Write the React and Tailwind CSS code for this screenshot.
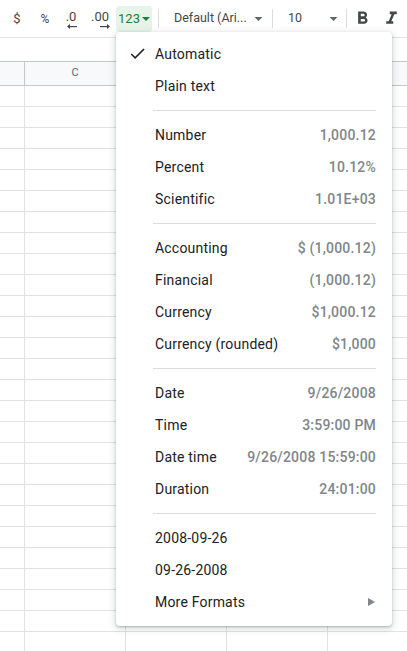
import React from "react";

const Tri = ({ color = "#5f6368", className = "" }) => (
  <svg width="10" height="5" viewBox="0 0 10 5" className={className}>
    <polygon points="0,0 10,0 5,5" fill={color} />
  </svg>
);

const Divider = () => <div className="w-px h-[19px] bg-[#dadce0] shrink-0" />;

const groups = [
  [
    { label: "Automatic", check: true },
    { label: "Plain text" },
  ],
  [
    { label: "Number", value: "1,000.12" },
    { label: "Percent", value: "10.12%" },
    { label: "Scientific", value: "1.01E+03" },
  ],
  [
    { label: "Accounting", value: "$ (1,000.12)" },
    { label: "Financial", value: "(1,000.12)" },
    { label: "Currency", value: "$1,000.12" },
    { label: "Currency (rounded)", value: "$1,000" },
  ],
  [
    { label: "Date", value: "9/26/2008" },
    { label: "Time", value: "3:59:00 PM" },
    { label: "Date time", value: "9/26/2008 15:59:00" },
    { label: "Duration", value: "24:01:00" },
  ],
  [
    { label: "2008-09-26" },
    { label: "09-26-2008" },
    { label: "More Formats", arrow: true },
  ],
];

function MenuItem({ item }) {
  return (
    <div className="relative flex items-center h-[32px] pl-[39px] pr-[16px]">
      {item.check && (
        <svg
          width="19"
          height="19"
          viewBox="0 0 24 24"
          className="absolute left-[12px] top-[6px]"
        >
          <path
            d="M9 16.17L4.83 12l-1.42 1.41L9 19 21 7l-1.41-1.41z"
            fill="#202124"
          />
        </svg>
      )}
      <span className="flex-1 text-[14px] tracking-[0.2px] text-[#202124] leading-none">
        {item.label}
      </span>
      {item.value && (
        <span className="text-[14px] tracking-[0.2px] font-medium text-[#80868b] leading-none">
          {item.value}
        </span>
      )}
      {item.arrow && (
        <svg width="7" height="8" viewBox="0 0 7 8" className="mr-[1px]">
          <polygon points="0,0 7,4 0,8" fill="#80868b" />
        </svg>
      )}
    </div>
  );
}

export default function App() {
  const rows = Array.from({ length: 28 });
  const cols = [25, 101, 101, 101, 101];
  return (
    <div
      className="relative w-[407px] h-[651px] overflow-hidden bg-white"
      style={{ fontFamily: "Roboto, 'Noto Sans', Arial, sans-serif" }}
    >
      {/* Toolbar */}
      <div className="flex items-center h-[38px] border-b border-[#e1e3e1] text-[#444746]">
        <div className="w-[4px] shrink-0" />
        <div className="w-[26px] h-[26px] shrink-0 flex items-center justify-center text-[13px]">
          $
        </div>
        <div className="w-[2px] shrink-0" />
        <div className="w-[26px] h-[26px] shrink-0 flex items-center justify-center text-[12px]">
          %
        </div>
        <div className="w-[26px] h-[26px] shrink-0 flex flex-col items-center justify-center">
          <span className="text-[13px] leading-none mt-[1px]">.0</span>
          <svg width="10" height="5" viewBox="0 0 10 5" className="mt-[1px] ml-[2px]">
            <path d="M0 2.5 L3 0 V5 Z" fill="#444746" />
            <rect x="2" y="2" width="8" height="1.2" fill="#444746" />
          </svg>
        </div>
        <div className="w-[2px] shrink-0" />
        <div className="w-[28px] h-[26px] shrink-0 flex flex-col items-center justify-center">
          <span className="text-[13px] leading-none mt-[1px]">.00</span>
          <svg width="10" height="5" viewBox="0 0 10 5" className="mt-[1px] ml-[10px]">
            <rect x="0" y="2" width="8" height="1.2" fill="#444746" />
            <path d="M10 2.5 L7 0 V5 Z" fill="#444746" />
          </svg>
        </div>
        <div className="w-[2px] shrink-0" />
        <div className="w-[36px] h-[26px] shrink-0 rounded-[3px] bg-[#e6f4ea] flex items-center justify-center gap-[2px] text-[#188038]">
          <span className="text-[13px] leading-none">123</span>
          <Tri color="#188038" className="w-[8px] h-[4px]" />
        </div>
        <div className="w-[6px] shrink-0" />
        <Divider />
        <div className="w-[113px] h-[26px] shrink-0 flex items-center pl-[15px] pr-[9px]">
          <span className="flex-1 text-[12.5px] leading-none whitespace-nowrap">
            Default (Ari...
          </span>
          <Tri className="w-[9px] h-[4px]" />
        </div>
        <Divider />
        <div className="w-[73px] h-[26px] shrink-0 flex items-center pl-[15px] pr-[8px]">
          <span className="flex-1 text-[12.5px] leading-none">10</span>
          <Tri className="w-[9px] h-[4px]" />
        </div>
        <Divider />
        <div className="w-[5px] shrink-0" />
        <svg width="21" height="21" viewBox="0 0 24 24" className="shrink-0">
          <path
            d="M15.6 10.79c.97-.67 1.65-1.77 1.65-2.79 0-2.26-1.75-4-4-4H7v14h7.04c2.09 0 3.71-1.7 3.71-3.79 0-1.52-.86-2.82-2.15-3.42zM10 6.5h3c.83 0 1.5.67 1.5 1.5s-.67 1.5-1.5 1.5h-3v-3zm3.5 9H10v-3h3.5c.83 0 1.5.67 1.5 1.5s-.67 1.5-1.5 1.5z"
            fill="#444746"
          />
        </svg>
        <div className="w-[8px] shrink-0" />
        <svg width="21" height="21" viewBox="0 0 24 24" className="shrink-0">
          <path d="M10 4v3h2.21l-3.42 8H6v3h8v-3h-2.21l3.42-8H18V4z" fill="#444746" />
        </svg>
      </div>

      {/* Formula bar area */}
      <div className="h-[23px]" />

      {/* Column header */}
      <div className="flex h-[25px] border-y border-[#c4c7c5] bg-[#f8f9fa]">
        {cols.map((w, i) => (
          <div
            key={i}
            style={{ width: w }}
            className="shrink-0 border-r border-[#c4c7c5] flex items-center justify-center text-[11px] text-[#5f6368]"
          >
            {i === 1 ? "C" : ""}
          </div>
        ))}
      </div>

      {/* Grid rows */}
      {rows.map((_, r) => (
        <div key={r} className="flex h-[21px] border-b border-[#e2e2e2]">
          {cols.map((w, i) => (
            <div
              key={i}
              style={{ width: w }}
              className="shrink-0 border-r border-[#e2e2e2]"
            />
          ))}
        </div>
      ))}

      {/* Format menu */}
      <div className="absolute left-[116px] top-[32px] w-[276px] bg-white rounded-[4px] pt-[6px] pb-[8px] shadow-[0_2px_6px_2px_rgba(60,64,67,0.15),0_1px_2px_0_rgba(60,64,67,0.3)]">
        {groups.map((g, gi) => (
          <div key={gi}>
            {gi > 0 && (
              <div className="py-[8px]">
                <div className="h-px bg-[#dadce0] ml-[37px] mr-[16px]" />
              </div>
            )}
            {g.map((item, ii) => (
              <MenuItem key={ii} item={item} />
            ))}
          </div>
        ))}
      </div>
    </div>
  );
}
